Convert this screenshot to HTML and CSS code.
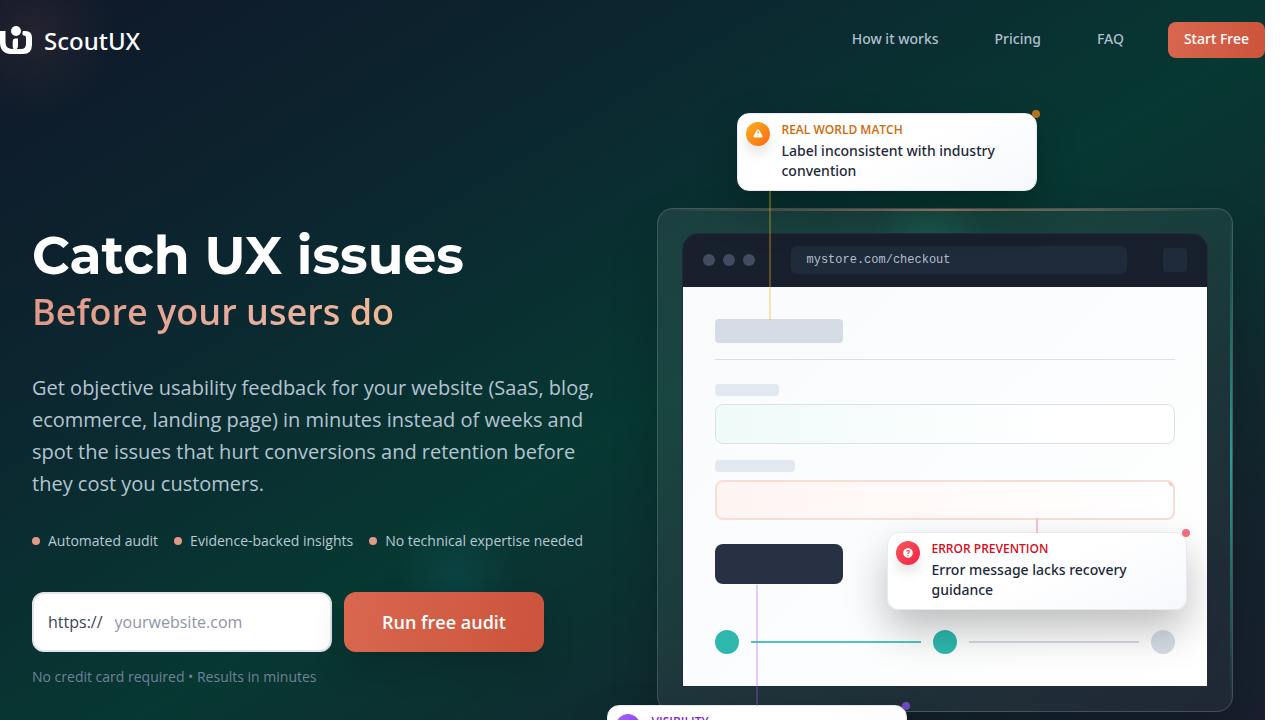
FILE: index.html
```
<!DOCTYPE html>
<html lang="en">
<head>
    <meta charset="UTF-8">
    <meta name="viewport" content="width=device-width, initial-scale=1.0">
    <title>ScoutUX</title>
    <link rel="stylesheet" href="styles.css">
</head>
<body>
    <div class="page">
        <!-- Navigation -->
        <header class="header">
            <a class="brand" href="#">
                <svg class="brand-logo" width="32" height="28" viewBox="0 0 32 28" aria-hidden="true">
                    <path d="M0 5h5.500v11q0 6 5 6.800l3 .2q-.8-1-.8-3V15.500q0-3 3-3h2.300V20q0 2-1.300 3H21q5 0 5-5v-6q0-1.800-1-2.200l-1.500-.3q-1-.2-1-1.500V6q0-1 1-1h2q6.500 .2 6.500 7v6.500Q32 28 23 28H10.500Q0 27.500 0 16z" fill="#fff"/>
                    <circle cx="16" cy="5" r="5" fill="#fff"/>
                </svg>
                <span>ScoutUX</span>
            </a>
            <nav class="nav">
                <a href="#how">How it works</a>
                <a href="#pricing">Pricing</a>
                <a href="#faq">FAQ</a>
                <a class="btn btn-small" href="#start">Start Free</a>
            </nav>
        </header>

        <main class="hero">
            <!-- Intro and audit form -->
            <section class="intro">
                <h1>Catch UX issues</h1>
                <p class="tagline">Before your users do</p>
                <p class="lead">Get objective usability feedback for your website (SaaS, blog, ecommerce, landing page) in minutes instead of weeks and spot the issues that hurt conversions and retention before they cost you customers.</p>
                <ul class="benefits">
                    <li>Automated audit</li>
                    <li>Evidence-backed insights</li>
                    <li>No technical expertise needed</li>
                </ul>
                <form class="audit-form">
                    <div class="url-field">
                        <label for="site">https://</label>
                        <input id="site" type="text" placeholder="yourwebsite.com">
                    </div>
                    <button class="btn btn-large" type="submit">Run free audit</button>
                </form>
                <p class="note">No credit card required • Results in minutes</p>
            </section>

            <!-- Checkout mockup with findings -->
            <section class="demo">
                <div class="browser">
                    <div class="browser-bar">
                        <div class="dots"><i></i><i></i><i></i></div>
                        <div class="address">mystore.com/checkout</div>
                        <div class="browser-menu"></div>
                    </div>
                    <div class="browser-page">
                        <div class="sk-head"><div class="sk-title"></div></div>
                        <div class="sk-group">
                            <div class="sk-label"></div>
                            <div class="sk-field"></div>
                        </div>
                        <div class="sk-group">
                            <div class="sk-label wide"></div>
                            <div class="sk-field error"></div>
                        </div>
                        <div class="sk-button"></div>
                        <div class="steps">
                            <span class="step done"></span>
                            <span class="step-line done"></span>
                            <span class="step done"></span>
                            <span class="step-line"></span>
                            <span class="step"></span>
                        </div>
                    </div>
                </div>

                <article class="finding finding-match">
                    <span class="finding-icon">
                        <svg width="12" height="12" viewBox="0 0 20 20" aria-hidden="true">
                            <path fill="#fff" fill-rule="evenodd" d="M8.257 3.099c.765-1.360 2.722-1.360 3.486 0l5.580 9.920c.75 1.334-.213 2.980-1.742 2.980H4.420c-1.530 0-2.493-1.646-1.743-2.980l5.580-9.920zM11 13a1 1 0 11-2 0 1 1 0 012 0zm-1-8a1 1 0 00-1 1v3a1 1 0 002 0V6a1 1 0 00-1-1z"/>
                        </svg>
                    </span>
                    <div>
                        <h2>Real World Match</h2>
                        <p>Label inconsistent with industry convention</p>
                    </div>
                </article>
                <article class="finding finding-error">
                    <span class="finding-icon">
                        <svg width="12" height="12" viewBox="0 0 20 20" aria-hidden="true">
                            <path fill="#fff" fill-rule="evenodd" d="M18 10a8 8 0 11-16 0 8 8 0 0116 0zm-8-3a1 1 0 00-.867.500 1 1 0 11-1.731-1A3 3 0 0113 8a3.001 3.001 0 01-2 2.830V11a1 1 0 11-2 0v-1a1 1 0 011-1 1 1 0 100-2zm0 8a1 1 0 100-2 1 1 0 000 2z"/>
                        </svg>
                    </span>
                    <div>
                        <h2>Error Prevention</h2>
                        <p>Error message lacks recovery guidance</p>
                    </div>
                </article>
                <article class="finding finding-visibility">
                    <span class="finding-icon"></span>
                    <div>
                        <h2>Visibility</h2>
                    </div>
                </article>
            </section>
        </main>
    </div>
</body>
</html>
```
FILE: styles.css
```
* { box-sizing: border-box; }

html { background: #fff; }

body {
    margin: 0;
    padding-right: 15px;
    height: 100vh;
    overflow: hidden;
    font-family: "Open Sans", "Noto Sans", sans-serif;
    color: #fff;
}

h1, h2, p, ul { margin: 0; padding: 0; }
a { color: inherit; text-decoration: none; }

.page {
    height: 100%;
    overflow: hidden;
    background:
        radial-gradient(circle at 32px 32px, rgba(224, 122, 95, 0.1), transparent 84px),
        radial-gradient(circle at 456px 576px, rgba(20, 110, 125, 0.22), transparent 60px),
        linear-gradient(149deg, #0f1729 0%, #0b2930 32%, #073832 54%, #14242e 85%, #181f2e 100%);
}

/* Header */
.header {
    display: flex;
    justify-content: space-between;
    height: 80px;
}
.brand {
    display: flex;
    align-items: center;
    gap: 12px;
    font-family: "Noto Sans", sans-serif;
    font-size: 24px;
    font-weight: 500;
}
.nav {
    display: flex;
    align-items: center;
    gap: 56px;
    font-family: "Noto Sans", sans-serif;
    font-size: 14px;
    font-weight: 500;
    line-height: 20px;
    color: #b0bfcc;
}
.nav a { padding-bottom: 2px; }

.btn {
    border: 0;
    background: linear-gradient(100deg, #d9674f, #cc533c);
    color: #fff;
    font-family: inherit;
    cursor: pointer;
}
.nav .btn-small {
    margin-left: -12px;
    padding: 7px 16px 9px;
    border-radius: 8px;
}
.btn-large {
    width: 200px;
    border-radius: 12px;
    font-size: 18px;
    font-weight: 600;
    box-shadow: 0 16px 32px rgba(0, 0, 0, 0.15);
}

/* Hero */
.hero {
    display: grid;
    grid-template-columns: 1fr 1fr;
    gap: 48px;
    padding: 128px 32px 0;
}
.intro { padding-top: 16px; }
.intro h1 {
    font-family: "Montserrat", "Open Sans", sans-serif;
    font-size: 52px;
    font-weight: 700;
    line-height: 64px;
}
.tagline {
    width: fit-content;
    font-size: 36px;
    font-weight: 600;
    line-height: 48px;
    background: linear-gradient(90deg, #e29a88, #eab0a0 70%, #f0b895);
    background-clip: text;
    -webkit-background-clip: text;
    color: transparent;
}
.lead {
    margin-top: 36px;
    font-size: 20px;
    line-height: 32px;
    color: #b4c4d1;
}
.benefits {
    display: flex;
    gap: 16px;
    margin-top: 31px;
    list-style: none;
    font-size: 14px;
    line-height: 20px;
    color: #b8c8d4;
}
.benefits li {
    display: flex;
    align-items: center;
    gap: 8px;
    white-space: nowrap;
}
.benefits li::before {
    content: "";
    width: 8px;
    height: 8px;
    border-radius: 50%;
    background: #e29a88;
}
.audit-form {
    display: flex;
    gap: 12px;
    height: 60px;
    margin-top: 41px;
}
.url-field {
    display: flex;
    align-items: center;
    gap: 12px;
    width: 300px;
    padding: 0 14px;
    border: 2px solid #e0e3ea;
    border-radius: 12px;
    background: #fff;
    font-size: 16px;
    color: #3b4454;
}
.url-field input {
    min-width: 0;
    flex: 1;
    padding: 0;
    border: 0;
    outline: 0;
    background: none;
    font: inherit;
}
.url-field input::placeholder { color: #9096a5; }
.note {
    margin-top: 15px;
    font-size: 14px;
    line-height: 20px;
    color: #6f8298;
}

/* Demo panel */
.demo {
    position: relative;
    padding: 24px;
    border: 1px solid rgba(255, 255, 255, 0.16);
    border-radius: 16px;
    background:
        radial-gradient(circle at 270px 32px, rgba(32, 160, 135, 0.2), transparent 56px),
        linear-gradient(135deg, rgba(255, 255, 255, 0.08), rgba(255, 255, 255, 0.04));
    box-shadow: 0 24px 48px rgba(0, 0, 0, 0.2);
}
.demo::before,
.demo::after {
    content: "";
    position: absolute;
}
.demo::before {
    top: 0;
    left: 0;
    right: 0;
    height: 2px;
    background: linear-gradient(90deg, transparent, rgba(226, 140, 118, 0.7), transparent);
}
.demo::after {
    top: 0;
    bottom: 0;
    right: 0;
    width: 2px;
    background: linear-gradient(transparent, #2a9d8f, transparent);
}
.browser {
    border: 1px solid #222b3b;
    border-radius: 16px 16px 0 0;
    overflow: hidden;
}
.browser-bar {
    display: flex;
    align-items: center;
    gap: 36px;
    height: 53px;
    padding: 0 20px;
    border-bottom: 1px solid #18202e;
    background: #18202e;
}
.dots { display: flex; gap: 8px; }
.dots i {
    width: 12px;
    height: 12px;
    border-radius: 50%;
    background: #414c61;
}
.address {
    flex: 1;
    height: 28px;
    padding: 0 16px;
    border-radius: 6px;
    background: #1f2a3a;
    font-family: "Liberation Mono", monospace;
    font-size: 12px;
    line-height: 28px;
    color: #b4bfcc;
}
.browser-menu {
    width: 24px;
    height: 24px;
    border-radius: 4px;
    background: #1f2a3a;
}
.browser-page {
    padding: 32px;
    background: linear-gradient(135deg, #f8fafc, #fff);
}
.sk-head {
    padding-bottom: 16px;
    margin-bottom: 24px;
    border-bottom: 1px solid #dcdfe8;
}
.sk-title {
    width: 128px;
    height: 24px;
    border-radius: 4px;
    background: #d5dce5;
}
.sk-group { margin-bottom: 16px; }
.sk-label {
    width: 64px;
    height: 12px;
    margin-bottom: 8px;
    border-radius: 4px;
    background: #e2e8f0;
}
.sk-label.wide { width: 80px; }
.sk-field {
    height: 40px;
    border: 1px solid #dbe1ea;
    border-radius: 8px;
    background: linear-gradient(90deg, #effbf9, #fff 75%);
}
.sk-field.error {
    border: 2px solid #f6ded6;
    background: radial-gradient(circle at 100% 0, #f3c5b8 4px, transparent 5px), linear-gradient(90deg, #fef5f2, #fff);
}
.sk-button {
    width: 128px;
    height: 40px;
    margin-top: 24px;
    border-radius: 8px;
    background: #283043;
}
.steps {
    display: flex;
    align-items: center;
    gap: 12px;
    margin-top: 46px;
}
.step {
    width: 24px;
    height: 24px;
    border-radius: 50%;
    background: #d5dce5;
}
.step-line {
    flex: 1;
    height: 2px;
    background: #d5dae5;
}
.step.done { background: #2eb8ad; }
.step-line.done { background: #54c4b9; }

/* Findings laid over the mockup */
.finding {
    position: absolute;
    display: flex;
    gap: 12px;
    width: 300px;
    min-height: 78px;
    padding: 8px;
    border: 1px solid #e5ebf2;
    border-radius: 12px;
    background: linear-gradient(155deg, #fff 50%, #f6f8fc);
    box-shadow: 0 20px 40px rgba(0, 0, 0, 0.25);
    color: #1e293b;
}
.finding h2 {
    margin-bottom: 3px;
    font-size: 12px;
    font-weight: 600;
    line-height: 16px;
    text-transform: uppercase;
}
.finding p {
    font-family: "Noto Sans", sans-serif;
    font-size: 14px;
    font-weight: 500;
    line-height: 20px;
}
.finding-icon {
    display: flex;
    flex: none;
    align-items: center;
    justify-content: center;
    width: 24px;
    height: 24px;
    border-radius: 50%;
    box-shadow: 0 8px 12px rgba(0, 0, 0, 0.1);
}
/* corner dot */
.finding::before {
    content: "";
    position: absolute;
    top: -4px;
    right: -4px;
    width: 8px;
    height: 8px;
    border-radius: 50%;
}
/* connector to the flagged element */
.finding::after {
    content: "";
    position: absolute;
    width: 2px;
}

.finding-match { left: 79px; top: -96px; }
.finding-match h2 { color: #d1690a; }
.finding-match .finding-icon { background: linear-gradient(135deg, #fbaf1b, #f96b13); }
.finding-match::before { background: #b37420; }
.finding-match::after {
    left: 31px;
    top: 100%;
    height: 130px;
    background: rgba(240, 185, 11, 0.32);
}

.finding-error { left: 229px; top: 323px; }
.finding-error h2 { color: #d40f20; }
.finding-error .finding-icon { background: linear-gradient(135deg, #f45a5a, #f32249); }
.finding-error::before { background: #f46b80; }
.finding-error::after {
    left: 148px;
    bottom: 100%;
    height: 15px;
    background: #f6bcc2;
}

.finding-visibility { left: -51px; top: 496px; }
.finding-visibility h2 { color: #7e1fd0; }
.finding-visibility .finding-icon { background: linear-gradient(135deg, #a864fa, #7c3aed); }
.finding-visibility::before { background: #7048bd; }
.finding-visibility::after {
    left: 148px;
    bottom: 100%;
    height: 121px;
    background: rgba(168, 85, 247, 0.3);
}
```
